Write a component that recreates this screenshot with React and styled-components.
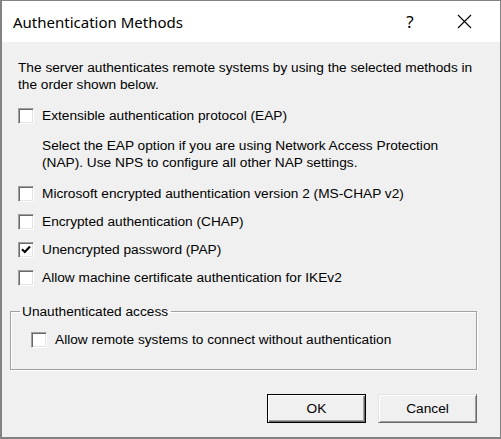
import React from 'react';
import styled, { createGlobalStyle } from 'styled-components';

const GlobalStyle = createGlobalStyle`
  html, body {
    margin: 0;
    padding: 0;
    background: #ffffff;
  }
  * {
    box-sizing: border-box;
  }
`;

const Window = styled.div`
  width: 501px;
  height: 439px;
  display: flex;
  flex-direction: column;
  border: 1px solid #828282;
  border-left-width: 2px;
  border-bottom-width: 2px;
  background: #f0f0f0;
  font-family: 'Liberation Sans', Arial, sans-serif;
  font-size: 13.7px;
  color: #000;
`;

const TitleBar = styled.div`
  height: 41px;
  flex: none;
  display: flex;
  align-items: center;
  background: #ffffff;
  padding: 0 9px 0 11px;
`;

const Title = styled.div`
  flex: 1;
  font-family: 'Segoe UI', 'Noto Sans', sans-serif;
  font-size: 15px;
  color: #000;
`;

const TitleButton = styled.div`
  width: 54px;
  height: 41px;
  display: flex;
  align-items: center;
  justify-content: center;
  font-family: 'Segoe UI', 'Noto Sans', sans-serif;
  font-size: 17px;
  color: #000;
`;

const Body = styled.div`
  flex: 1;
  display: flex;
  flex-direction: column;
  padding: 17px 23px 0 8px;
`;

const Para = styled.p`
  margin: ${(p) => p.$mt || 0}px 0 0 ${(p) => p.$indent || 8}px;
  line-height: 17px;
  white-space: nowrap;
`;

const Row = styled.label`
  display: flex;
  align-items: center;
  gap: 8px;
  height: 17px;
  margin: ${(p) => p.$mt || 0}px 0 0 ${(p) => p.$indent || 8}px;
  line-height: 17px;
  white-space: nowrap;
`;

const Box = styled.span`
  width: 16px;
  height: 16px;
  flex: none;
  display: flex;
  align-items: center;
  justify-content: center;
  background: #ffffff;
  border-top: 1px solid #a0a0a0;
  border-left: 1px solid #a0a0a0;
  border-right: 1px solid #ffffff;
  border-bottom: 1px solid #ffffff;
  box-shadow: inset 1px 1px 0 #696969, inset -1px -1px 0 #e3e3e3;
`;

const Group = styled.fieldset`
  margin: 17px 0 0 0;
  padding: 4px 0 21px 0;
  border: 1px solid #a0a0a0;
  box-shadow: 1px 1px 0 #ffffff, inset 1px 1px 0 #ffffff;
  min-width: 0;
`;

const Legend = styled.legend`
  margin-left: 9px;
  padding: 0 3px 0 2px;
  line-height: 17px;
`;

const Footer = styled.div`
  display: flex;
  justify-content: flex-end;
  gap: 12px;
  margin-top: 24px;
`;

const Button = styled.button`
  width: 99px;
  height: 29px;
  font-family: 'Liberation Sans', Arial, sans-serif;
  font-size: 13.7px;
  color: #000;
  background: #f0f0f0;
  padding: 0;
  border-top: 1px solid ${(p) => (p.$default ? '#000' : '#e3e3e3')};
  border-left: 1px solid ${(p) => (p.$default ? '#000' : '#e3e3e3')};
  border-right: 1px solid ${(p) => (p.$default ? '#000' : '#696969')};
  border-bottom: 1px solid ${(p) => (p.$default ? '#000' : '#696969')};
  box-shadow: ${(p) =>
    p.$default
      ? 'inset 1px 1px 0 #ffffff, inset -1px -1px 0 #696969, inset -2px -2px 0 #a0a0a0'
      : 'inset 1px 1px 0 #ffffff, inset -1px -1px 0 #a0a0a0'};
`;

const Check = ({ checked }) => (
  <Box>
    {checked && (
      <svg width="10" height="9" viewBox="0 0 10 9">
        <path d="M1 4.2 L3.8 7 L9 1.6" fill="none" stroke="#000" strokeWidth="2.2" />
      </svg>
    )}
  </Box>
);

const CloseIcon = () => (
  <svg width="15" height="15" viewBox="0 0 15 15">
    <path d="M1 1 L14 14 M14 1 L1 14" stroke="#000" strokeWidth="1.1" />
  </svg>
);

const App = () => {
  return (
    <>
      <GlobalStyle />
      <Window>
        <TitleBar>
          <Title>Authentication Methods</Title>
          <TitleButton>?</TitleButton>
          <TitleButton>
            <CloseIcon />
          </TitleButton>
        </TitleBar>
        <Body>
          <Para>
            The server authenticates remote systems by using the selected methods in
            <br />
            the order shown below.
          </Para>
          <Row $mt={14}>
            <Check />
            Extensible authentication protocol (EAP)
          </Row>
          <Para $mt={13} $indent={32}>
            Select the EAP option if you are using Network Access Protection
            <br />
            (NAP). Use NPS to configure all other NAP settings.
          </Para>
          <Row $mt={14}>
            <Check />
            Microsoft encrypted authentication version 2 (MS-CHAP v2)
          </Row>
          <Row $mt={11}>
            <Check />
            Encrypted authentication (CHAP)
          </Row>
          <Row $mt={11}>
            <Check checked />
            Unencrypted password (PAP)
          </Row>
          <Row $mt={11}>
            <Check />
            Allow machine certificate authentication for IKEv2
          </Row>
          <Group>
            <Legend>Unauthenticated access</Legend>
            <Row $mt={7} $indent={20}>
              <Check />
              Allow remote systems to connect without authentication
            </Row>
          </Group>
          <Footer>
            <Button $default>OK</Button>
            <Button>Cancel</Button>
          </Footer>
        </Body>
      </Window>
    </>
  );
};

export default App;
